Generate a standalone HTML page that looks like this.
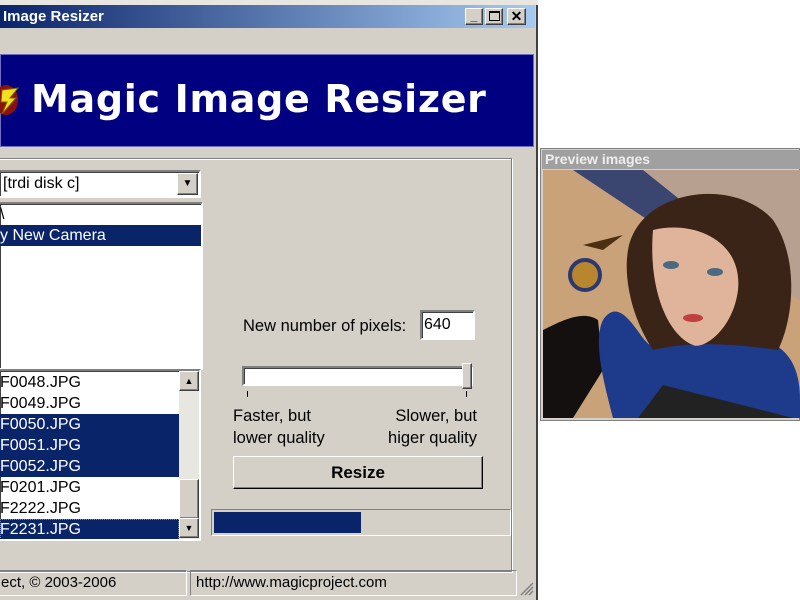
<!DOCTYPE html>
<html><head><style>
*{margin:0;padding:0;box-sizing:border-box}
body{width:800px;height:600px;background:#fff;position:relative;overflow:hidden;font-family:"Liberation Sans",sans-serif;font-size:16px;color:#000}
.a{position:absolute}
.sunk{border:2px solid;border-color:#808080 #fff #fff #808080;box-shadow:inset 1px 1px 0 #404040}
.raised{background:#d4d0c8;border:1px solid;border-color:#fff #404040 #404040 #fff;box-shadow:inset -1px -1px 0 #808080}
.row{position:absolute;left:0;height:21px;line-height:21px;white-space:nowrap}
.sel{background:#0a246a;color:#fff}
</style></head><body>
<div class="a" style="left:0;top:0;width:538px;height:600px;background:#d4d0c8;border-right:2px solid #404040"></div>
<div class="a" style="left:0;top:0;width:538px;height:5px;background:#e8e6e0"></div>
<div class="a" style="left:0;top:5px;width:535px;height:23px;background:linear-gradient(90deg,#0a246a,#a6caf0);color:#fff;font-weight:bold;font-size:15px;line-height:23px;padding-left:3px">Image Resizer</div>
<div class="a raised" style="left:465px;top:8px;width:18px;height:17px;font-size:12px;line-height:14px;text-align:center;font-weight:bold">_</div>
<div class="a raised" style="left:485px;top:8px;width:18px;height:17px"><div class="a" style="left:3px;top:2px;width:11px;height:10px;border:1px solid #000;border-top-width:2px"></div></div>
<div class="a raised" style="left:507px;top:8px;width:19px;height:17px;font-size:14px;line-height:15px;text-align:center;font-weight:bold">✕</div>
<div class="a" style="left:0;top:54px;width:534px;height:93px;background:#000080;border:1px solid #7070c0"></div>
<svg class="a" style="left:0;top:80px" width="24" height="40"><ellipse cx="6" cy="20" rx="12" ry="15" fill="#8b1010"/><path d="M2 10 L18 8 L10 18 L16 18 L2 34 L7 22 L1 22 Z" fill="#f0e020" stroke="#806000"/></svg>
<div class="a" style="left:31px;top:75px;color:#fff;font-weight:bold;font-size:38px;line-height:48px;letter-spacing:0.7px;font-family:'DejaVu Sans',sans-serif">Magic Image Resizer</div>
<div class="a" style="left:-2px;top:158px;width:514px;height:414px;border:1px solid #808080;box-shadow:1px 1px 0 #fff,inset 1px 1px 0 #fff"></div>
<div class="a sunk" style="left:-2px;top:170px;width:203px;height:28px;background:#fff"><div class="a" style="left:3px;top:2px;line-height:20px">[trdi disk c]</div><div class="a raised" style="left:177px;top:1px;width:21px;height:22px;font-size:10px;text-align:center;line-height:20px">▼</div></div>
<div class="a sunk" style="left:-2px;top:202px;width:205px;height:168px;background:#fff;overflow:hidden">
<div class="row" style="top:0;padding-left:0">\</div>
<div class="row sel" style="top:21px;width:201px">y New Camera</div></div>
<div class="a sunk" style="left:-2px;top:369px;width:203px;height:172px;background:#fff;overflow:hidden">
<div class="row" style="top:1px">F0048.JPG</div>
<div class="row" style="top:22px">F0049.JPG</div>
<div class="row sel" style="top:43px;width:179px">F0050.JPG</div>
<div class="row sel" style="top:64px;width:179px">F0051.JPG</div>
<div class="row sel" style="top:85px;width:179px">F0052.JPG</div>
<div class="row" style="top:106px">F0201.JPG</div>
<div class="row" style="top:127px">F2222.JPG</div>
<div class="row sel" style="top:148px;width:179px;outline:1px dotted #888;outline-offset:-1px">F2231.JPG</div>
<div class="a" style="left:179px;top:0;width:20px;height:168px;background:#e8e6e0"></div>
<div class="a raised" style="left:179px;top:0;width:20px;height:20px;font-size:9px;text-align:center;line-height:18px">▲</div>
<div class="a raised" style="left:179px;top:108px;width:20px;height:40px"></div>
<div class="a raised" style="left:179px;top:147px;width:20px;height:20px;font-size:9px;text-align:center;line-height:18px">▼</div></div>
<div class="a" style="left:243px;top:316px;line-height:20px;font-size:16.5px">New number of pixels:</div>
<div class="a sunk" style="left:420px;top:310px;width:55px;height:30px;background:#fff;padding:4px 2px;line-height:18px">640</div>
<div class="a sunk" style="left:242px;top:366px;width:231px;height:20px;background:#fff"></div>
<div class="a raised" style="left:462px;top:363px;width:10px;height:26px"></div>
<div class="a" style="left:247px;top:391px;width:1px;height:6px;background:#000"></div>
<div class="a" style="left:466px;top:391px;width:1px;height:6px;background:#000"></div>
<div class="a" style="left:233px;top:405px;line-height:22px;font-size:16.5px">Faster, but<br>lower quality</div>
<div class="a" style="left:360px;top:405px;width:117px;text-align:right;line-height:22px;font-size:16.5px">Slower, but<br>higer quality</div>
<div class="a raised" style="left:233px;top:456px;width:250px;height:33px;text-align:center;font-weight:bold;font-size:17px;line-height:31px;border-color:#fff #000 #000 #fff">Resize</div>
<div class="a" style="left:211px;top:509px;width:300px;height:27px;border:1px solid;border-color:#808080 #fff #fff #808080"><div class="a" style="left:2px;top:2px;width:147px;height:21px;background:#0a246a"></div></div>
<div class="a" style="left:-2px;top:570px;width:189px;height:26px;border:1px solid;border-color:#808080 #fff #fff #808080;line-height:24px;padding-left:2px;font-size:15px">ect, © 2003-2006</div>
<div class="a" style="left:190px;top:570px;width:327px;height:26px;border:1px solid;border-color:#808080 #fff #fff #808080;line-height:24px;padding-left:5px;font-size:15px">http://www.magicproject.com</div>
<svg class="a" style="left:518px;top:580px" width="16" height="16"><path d="M15 3L3 15M15 7L7 15M15 11L11 15" stroke="#808080" stroke-width="1.5"/></svg>
<div class="a" style="left:540px;top:148px;width:260px;height:273px;background:#d4d0c8;border:1px solid #808080"></div>
<div class="a" style="left:542px;top:150px;width:258px;height:19px;background:#a0a0a0;color:#eee;font-weight:bold;font-size:14px;line-height:19px;padding-left:3px">Preview images</div>
<svg class="a" style="left:543px;top:170px" width="257" height="248" viewBox="0 0 257 248">
<rect width="257" height="248" fill="#c9a27a"/>
<path d="M0 0H257V130L120 60L30 0Z" fill="#b8a090"/>
<path d="M30 0L120 60L150 40L100 0Z" fill="#3a4670"/>
<path d="M0 160C20 150 40 140 55 150L60 200L30 248H0Z" fill="#141010"/>
<circle cx="42" cy="105" r="15" fill="#b8862e" stroke="#2a3a70" stroke-width="4"/>
<path d="M40 75L80 65L60 80Z" fill="#4a3010"/>
<path d="M60 150C80 120 100 180 110 175C140 160 170 170 200 165C240 170 257 190 257 230V248H70C60 210 50 170 60 150Z" fill="#1e3a8a"/>
<path d="M95 248L120 215L250 248Z" fill="#222"/>
<path d="M85 80C95 20 190 5 230 50C257 90 250 150 235 180C200 175 150 170 110 180C90 150 80 110 85 80Z" fill="#3a2418"/>
<path d="M110 60C150 50 200 70 195 120C190 160 160 180 150 175C125 165 105 120 110 60Z" fill="#e0b49a"/>
<ellipse cx="128" cy="95" rx="8" ry="4" fill="#4a6a80"/>
<ellipse cx="172" cy="102" rx="8" ry="4" fill="#4a6a80"/>
<ellipse cx="150" cy="148" rx="10" ry="4" fill="#c04040"/>
</svg>
</body></html>
